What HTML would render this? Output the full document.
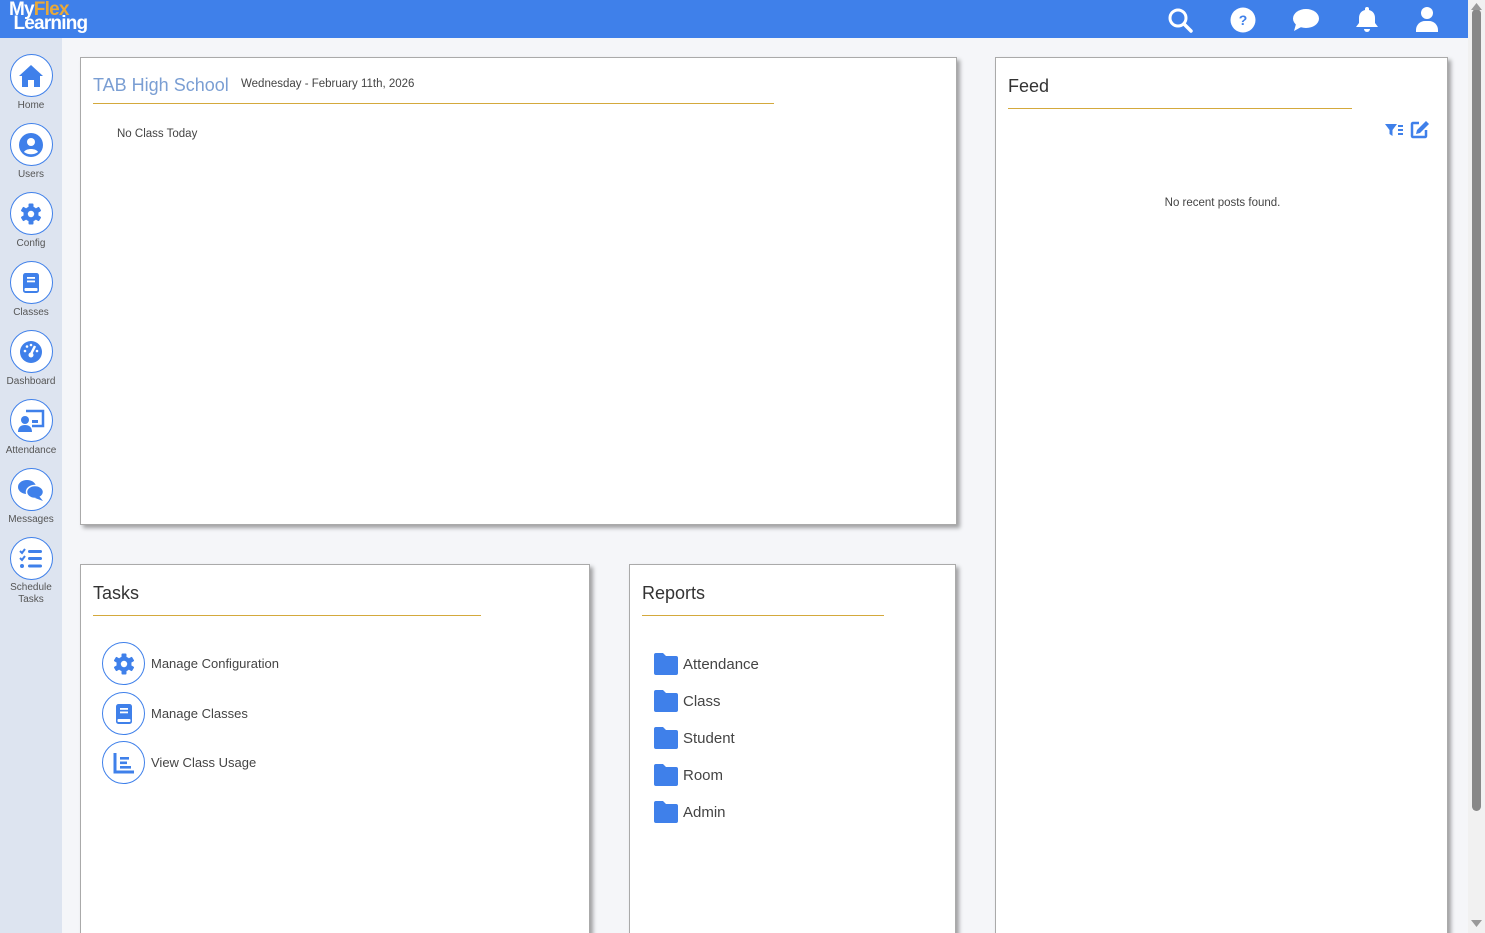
<!DOCTYPE html>
<html style="overflow:hidden;height:933px"><head><meta charset="utf-8"><style>
*{box-sizing:border-box;margin:0;padding:0}
html,body{width:1485px;height:933px;overflow:hidden}
body{background:#f5f6f9;font-family:"Liberation Sans",sans-serif;color:#444;position:relative}
.top{position:absolute;left:0;top:0;width:1468px;height:38px;background:#3f80ea}
.logo{position:absolute;left:9px;top:3px;color:#fff;font-weight:bold;font-size:19px;line-height:14px;letter-spacing:-0.8px}
.logo span{color:#e8a93a}
.side{position:absolute;left:0;top:38px;width:62px;height:895px;background:#dde4f0}
.si{position:absolute;left:0;width:62px;text-align:center;font-size:10px;color:#555}
.si .c{width:43px;height:43px;border-radius:50%;border:1.5px solid #3f80ea;background:#fff;margin:0 auto 3px;display:flex;align-items:center;justify-content:center}
.card{position:absolute;background:#fff;border:1px solid #aaa;box-shadow:3px 3px 4px rgba(0,0,0,.35)}
.h{position:absolute;font-size:18px;color:#333}
.line{position:absolute;height:2px;border-top:1px solid #d4a93c}
.sb{position:absolute;left:1468px;top:0;width:17px;height:933px;background:#f1f1f1}
.thumb{position:absolute;left:1472px;top:9px;width:9px;height:802px;background:#888;border-radius:5px}
.task{position:absolute;left:21px;display:flex;align-items:center;font-size:13px;color:#444}
.task .c{width:43px;height:43px;border-radius:50%;border:1.5px solid #3f80ea;display:flex;align-items:center;justify-content:center;margin-right:6px}
.rep{position:absolute;left:22px;display:flex;align-items:center;font-size:15px;color:#444}
.rep svg{margin-right:3px}
</style></head><body>
<svg width="0" height="0" style="position:absolute">
<defs>
<symbol id="gear" viewBox="0 0 24 24"><g fill="#3f80ea"><circle cx="12" cy="12" r="7.5"/><rect x="9.5" y="1.5" width="5" height="21" rx="1"/><rect x="9.5" y="1.5" width="5" height="21" rx="1" transform="rotate(60 12 12)"/><rect x="9.5" y="1.5" width="5" height="21" rx="1" transform="rotate(120 12 12)"/></g><circle cx="12" cy="12" r="3.2" fill="#fff"/></symbol>
<symbol id="book" viewBox="0 0 24 24"><rect x="4" y="2" width="16" height="20" rx="2.5" fill="#3f80ea"/><rect x="8" y="6" width="8" height="1.8" fill="#fff"/><rect x="8" y="9.5" width="8" height="1.8" fill="#fff"/><rect x="5.5" y="17" width="13" height="3" rx="1" fill="#fff"/></symbol>
<symbol id="folder" viewBox="0 0 26 24"><path d="M1 3a2 2 0 0 1 2-2h7l3 3h10a2 2 0 0 1 2 2v15a2 2 0 0 1-2 2H3a2 2 0 0 1-2-2z" fill="#3f80ea"/></symbol>
</defs></svg>
<div class="top">
<div class="logo">My<span>Flex</span><br>&nbsp;Learning</div>
<svg style="position:absolute;left:1167px;top:7px" width="26" height="26" viewBox="0 0 26 26"><circle cx="11" cy="11" r="8" fill="none" stroke="#fff" stroke-width="3"/><line x1="17" y1="17" x2="24" y2="24" stroke="#fff" stroke-width="3.5" stroke-linecap="round"/></svg>
<svg style="position:absolute;left:1230px;top:7px" width="26" height="26" viewBox="0 0 26 26"><circle cx="13" cy="13" r="12.5" fill="#fff"/><text x="13" y="18" text-anchor="middle" font-family="Liberation Sans" font-weight="bold" font-size="14" fill="#3f80ea">?</text></svg>
<svg style="position:absolute;left:1292px;top:8px" width="28" height="24" viewBox="0 0 28 24"><ellipse cx="14" cy="10.5" rx="13" ry="9.5" fill="#fff"/><path d="M4 16 L2 23 L11 18z" fill="#fff"/></svg>
<svg style="position:absolute;left:1355px;top:6px" width="24" height="27" viewBox="0 0 24 27"><path d="M12 1a2 2 0 0 1 2 2v1c4 1 6 4 6 8v5l3 4H1l3-4v-5c0-4 2-7 6-8V3a2 2 0 0 1 2-2z" fill="#fff"/><path d="M9 23h6a3 3 0 0 1-6 0z" fill="#fff"/></svg>
<svg style="position:absolute;left:1415px;top:6px" width="24" height="27" viewBox="0 0 24 27"><circle cx="12" cy="7" r="6" fill="#fff"/><path d="M1 26v-2c0-5 4-9 9-9h4c5 0 9 4 9 9v2z" fill="#fff"/></svg>
</div>
<div class="side">
<div class="si" style="top:16px"><div class="c"><svg width="26" height="24" viewBox="0 0 26 24"><path d="M13 1L1 12h3v11h6v-7h6v7h6V12h3z" fill="#3f80ea"/></svg></div>Home</div>
<div class="si" style="top:85px"><div class="c"><svg width="26" height="26" viewBox="0 0 26 26"><circle cx="13" cy="13" r="12" fill="#3f80ea"/><circle cx="13" cy="10" r="4" fill="#fff"/><path d="M6 20c2-4 12-4 14 0c-4 3-10 3-14 0z" fill="#fff"/></svg></div>Users</div>
<div class="si" style="top:154px"><div class="c"><svg width="24" height="24"><use href="#gear"/></svg></div>Config</div>
<div class="si" style="top:223px"><div class="c"><svg width="24" height="26"><use href="#book"/></svg></div>Classes</div>
<div class="si" style="top:292px"><div class="c"><svg width="24" height="24" viewBox="0 0 24 24"><circle cx="12" cy="12" r="11" fill="#3f80ea"/><path d="M12 14 L16 6" stroke="#fff" stroke-width="2.5"/><circle cx="12" cy="15" r="2.5" fill="#fff"/><circle cx="6" cy="11" r="1.3" fill="#fff"/><circle cx="8" cy="6.5" r="1.3" fill="#fff"/><circle cx="12" cy="5" r="1.3" fill="#fff"/><circle cx="18" cy="11" r="1.3" fill="#fff"/></svg></div>Dashboard</div>
<div class="si" style="top:361px"><div class="c"><svg width="28" height="24" viewBox="0 0 28 24"><path d="M9 2h17v15h-11" fill="none" stroke="#3f80ea" stroke-width="2.5"/><rect x="15" y="11" width="6" height="3" fill="#3f80ea"/><circle cx="8" cy="11" r="4" fill="#3f80ea"/><path d="M1 23c0-5 3-7 7-7s7 2 7 7z" fill="#3f80ea"/></svg></div>Attendance</div>
<div class="si" style="top:430px"><div class="c"><svg width="28" height="24" viewBox="0 0 28 24"><ellipse cx="10" cy="9" rx="9" ry="7" fill="#3f80ea"/><ellipse cx="18" cy="14" rx="8.5" ry="6.5" fill="#3f80ea" stroke="#fff" stroke-width="1.5"/><path d="M22 18l4 5-8-3z" fill="#3f80ea"/></svg></div>Messages</div>
<div class="si" style="top:499px;line-height:12px"><div class="c" style="margin-bottom:2px"><svg width="26" height="24" viewBox="0 0 26 24"><path d="M2 4l2 2 3-4M2 11l2 2 3-4" fill="none" stroke="#3f80ea" stroke-width="2"/><circle cx="4" cy="19" r="2" fill="#3f80ea"/><rect x="10" y="3" width="14" height="3" rx="1.5" fill="#3f80ea"/><rect x="10" y="10" width="14" height="3" rx="1.5" fill="#3f80ea"/><rect x="10" y="17.5" width="14" height="3" rx="1.5" fill="#3f80ea"/></svg></div>Schedule<br>Tasks</div>
</div>

<div class="card" style="left:80px;top:57px;width:877px;height:468px">
<div class="h" style="left:12px;top:17px;color:#7a9ed3">TAB High School</div>
<div style="position:absolute;left:160px;top:20px;font-size:11.5px;color:#444">Wednesday - February 11th, 2026</div>
<div class="line" style="left:12px;top:45px;width:681px"></div>
<div style="position:absolute;left:36px;top:70px;font-size:11.5px;color:#444">No Class Today</div>
</div>

<div class="card" style="left:995px;top:57px;width:453px;height:890px">
<div class="h" style="left:12px;top:18px">Feed</div>
<div class="line" style="left:12px;top:50px;width:344px"></div>
<svg style="position:absolute;left:388px;top:64px" width="20" height="16" viewBox="0 0 20 16"><path d="M1 2h12l-4.5 6v6l-3-2V8z" fill="#3f80ea"/><rect x="14" y="3" width="5" height="2" fill="#3f80ea"/><rect x="14" y="7" width="5" height="2" fill="#3f80ea"/><rect x="14" y="11" width="5" height="2" fill="#3f80ea"/></svg>
<svg style="position:absolute;left:414px;top:62px" width="20" height="19" viewBox="0 0 20 19"><path d="M9 3H3a1 1 0 0 0-1 1v12a1 1 0 0 0 1 1h12a1 1 0 0 0 1-1v-6" fill="none" stroke="#3f80ea" stroke-width="2.5"/><path d="M16 1l3 3-9 9-4 1 1-4z" fill="#3f80ea"/></svg>
<div style="position:absolute;left:0;width:453px;text-align:center;top:139px;font-size:11.5px;color:#444">No recent posts found.</div>
</div>

<div class="card" style="left:80px;top:564px;width:510px;height:380px">
<div class="h" style="left:12px;top:18px">Tasks</div>
<div class="line" style="left:12px;top:50px;width:388px"></div>
<div class="task" style="top:77px"><div class="c"><svg width="24" height="24"><use href="#gear"/></svg></div>Manage Configuration</div>
<div class="task" style="top:127px"><div class="c"><svg width="24" height="26"><use href="#book"/></svg></div>Manage Classes</div>
<div class="task" style="top:176px"><div class="c"><svg width="24" height="24" viewBox="0 0 24 24"><path d="M3 2v19h19" fill="none" stroke="#3f80ea" stroke-width="3"/><rect x="8" y="6" width="9" height="2.6" fill="#3f80ea"/><rect x="8" y="10.5" width="7" height="2.6" fill="#3f80ea"/><rect x="8" y="15" width="11" height="2.6" fill="#3f80ea"/></svg></div>View Class Usage</div>
</div>

<div class="card" style="left:629px;top:564px;width:327px;height:380px">
<div class="h" style="left:12px;top:18px">Reports</div>
<div class="line" style="left:12px;top:50px;width:242px"></div>
<div class="rep" style="top:87px"><svg width="28" height="24"><use href="#folder"/></svg>Attendance</div>
<div class="rep" style="top:124px"><svg width="28" height="24"><use href="#folder"/></svg>Class</div>
<div class="rep" style="top:161px"><svg width="28" height="24"><use href="#folder"/></svg>Student</div>
<div class="rep" style="top:198px"><svg width="28" height="24"><use href="#folder"/></svg>Room</div>
<div class="rep" style="top:235px"><svg width="28" height="24"><use href="#folder"/></svg>Admin</div>
</div>

<div class="sb"></div><div class="thumb"></div>
<svg style="position:absolute;left:1471px;top:3px" width="11" height="8"><path d="M0 7L5.5 0 11 7z" fill="#999"/></svg>
<svg style="position:absolute;left:1471px;top:920px" width="11" height="8"><path d="M0 0L5.5 7 11 0z" fill="#999"/></svg>
</body></html>
